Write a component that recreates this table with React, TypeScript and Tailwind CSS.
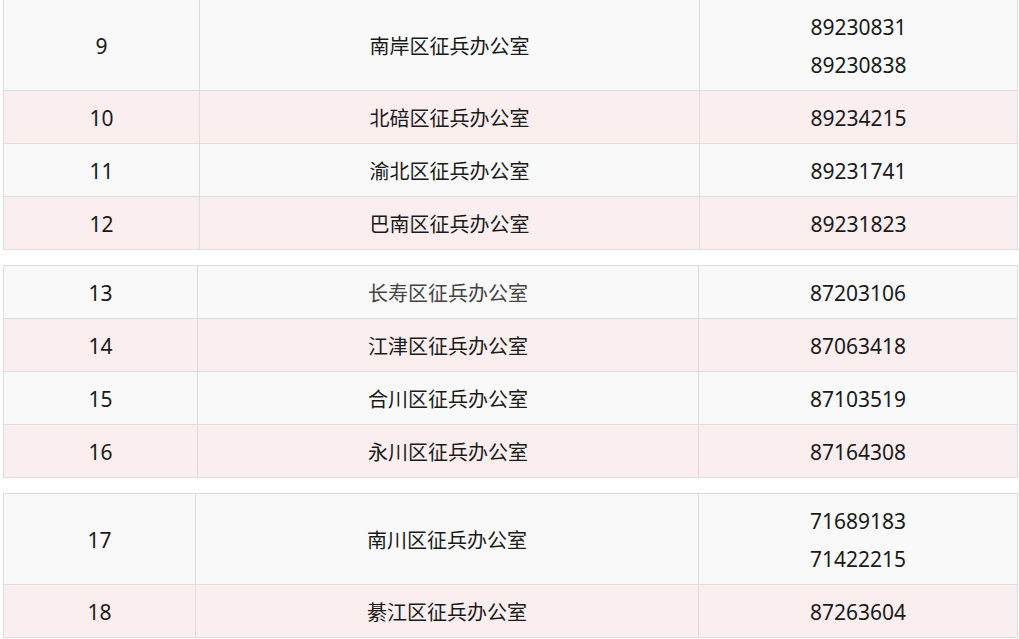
import React from "react";

type Row = { n: string; name: string; phones: string[]; gray?: boolean };
type Table = { w1: string; w2: string; rows: Row[] };

const tables: Table[] = [
  {
    w1: "w-[196px]",
    w2: "w-[500px]",
    rows: [
      { n: "9", name: "南岸区征兵办公室", phones: ["89230831", "89230838"] },
      { n: "10", name: "北碚区征兵办公室", phones: ["89234215"] },
      { n: "11", name: "渝北区征兵办公室", phones: ["89231741"] },
      { n: "12", name: "巴南区征兵办公室", phones: ["89231823"] },
    ],
  },
  {
    w1: "w-[194px]",
    w2: "w-[501px]",
    rows: [
      { n: "13", name: "长寿区征兵办公室", phones: ["87203106"], gray: true },
      { n: "14", name: "江津区征兵办公室", phones: ["87063418"] },
      { n: "15", name: "合川区征兵办公室", phones: ["87103519"] },
      { n: "16", name: "永川区征兵办公室", phones: ["87164308"] },
    ],
  },
  {
    w1: "w-[192px]",
    w2: "w-[503px]",
    rows: [
      { n: "17", name: "南川区征兵办公室", phones: ["71689183", "71422215"] },
      { n: "18", name: "綦江区征兵办公室", phones: ["87263604"] },
    ],
  },
];

export default function App() {
  return (
    <div
      className="bg-white w-[1019px] h-[639px] overflow-hidden text-[#1a1a1a]"
      style={{ fontFamily: '"Noto Sans", "Noto Sans CJK SC", sans-serif' }}
    >
      <div className="-mt-px pl-[3px] flex flex-col gap-[15px]">
        {tables.map((t, ti) => (
          <div key={ti} className="w-[1015px] border border-[#dddddd] flex flex-col">
            {t.rows.map((r, ri) => (
              <div
                key={ri}
                className={
                  "flex " +
                  (ri > 0 ? "border-t border-[#dddddd] " : "") +
                  (ri % 2 === 0 ? "bg-[#f9f9f9]" : "bg-[#fbeeee]")
                }
              >
                <div
                  className={
                    t.w1 +
                    " shrink-0 border-r border-[#dddddd] pt-[8px] pb-[6px] flex items-center justify-center text-[21px] leading-[38px]"
                  }
                >
                  {r.n}
                </div>
                <div
                  className={
                    t.w2 +
                    " shrink-0 border-r border-[#dddddd] pt-[9px] pb-[5px] flex items-center justify-center text-[20px] leading-[38px] " +
                    (r.gray ? "text-[#444444]" : "")
                  }
                >
                  {r.name}
                </div>
                <div className="flex-1 pt-[8px] pb-[6px] flex flex-col items-center justify-center text-[21px] leading-[38px]">
                  {r.phones.map((p) => (
                    <div key={p}>{p}</div>
                  ))}
                </div>
              </div>
            ))}
          </div>
        ))}
      </div>
    </div>
  );
}
